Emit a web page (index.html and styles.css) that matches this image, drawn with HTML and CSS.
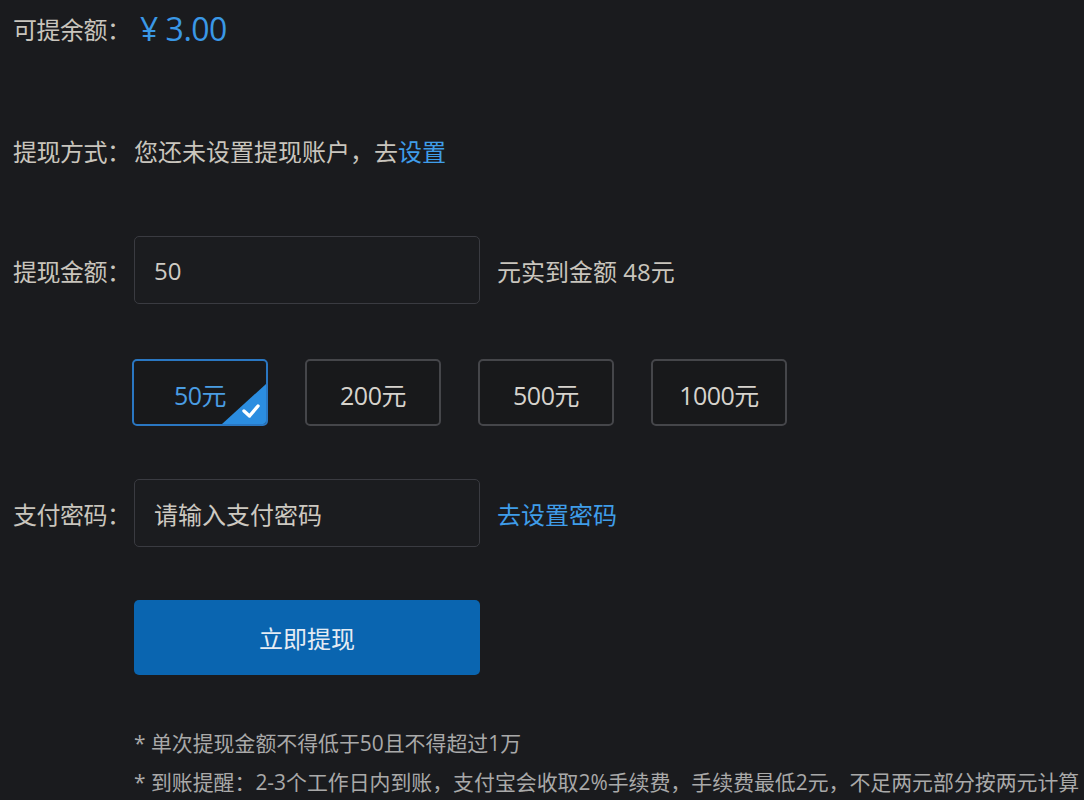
FILE: index.html
```html
<!DOCTYPE html>
<html lang="zh-CN">
<head>
<meta charset="utf-8">
<title>提现</title>
<link rel="stylesheet" href="styles.css">
</head>
<body>
<main class="page">
  <div class="row row-balance">
    <span class="label">可提余额：</span>
    <span class="balance">¥ 3.00</span>
  </div>
  <div class="row row-method">
    <span class="label">提现方式：</span>
    <span class="text">您还未设置提现账户，去<a class="link" href="#">设置</a></span>
  </div>
  <div class="row row-amount">
    <span class="label">提现金额：</span>
    <div class="field"><span class="value">50</span></div>
    <span class="aside">元实到金额 48元</span>
  </div>
  <div class="row row-options">
    <span class="label"></span>
    <div class="options">
      <div class="opt selected">50元
        <span class="corner">
          <svg viewBox="0 0 44 40" width="44" height="40"><polygon points="44,0 44,40 0,40" fill="#2b8de0"/><path d="M22 27 L27.5 32 L36 22" fill="none" stroke="#ffffff" stroke-width="3.4" stroke-linecap="round" stroke-linejoin="round"/></svg>
        </span>
      </div>
      <div class="opt">200元</div>
      <div class="opt">500元</div>
      <div class="opt">1000元</div>
    </div>
  </div>
  <div class="row row-pwd">
    <span class="label">支付密码：</span>
    <div class="field"><span class="placeholder">请输入支付密码</span></div>
    <a class="aside link" href="#">去设置密码</a>
  </div>
  <div class="row row-submit">
    <span class="label"></span>
    <button class="submit" type="button">立即提现</button>
  </div>
  <div class="notes">
    <p>* 单次提现金额不得低于50且不得超过1万</p>
    <p>* 到账提醒：2-3个工作日内到账，支付宝会收取2%手续费，手续费最低2元，不足两元部分按两元计算</p>
  </div>
</main>
</body>
</html>
```
FILE: styles.css
```css
html, body {
  margin: 0;
  padding: 0;
  background: #1a1b1e;
}
body {
  width: 1084px;
  height: 800px;
  overflow: hidden;
  font-family: "Open Sans", "Noto Sans CJK SC", sans-serif;
  color: #c9c5bd;
}
.page {
  padding-left: 13px;
  display: flex;
  flex-direction: column;
}
.row {
  display: flex;
  align-items: center;
  font-size: 24px;
}
.label {
  width: 121px;
  flex: none;
  white-space: nowrap;
  letter-spacing: -0.5px;
}
.row-balance { height: 56px; }
.balance {
  margin-left: 6px;
  color: #3a98e6;
  font-size: 32px;
  letter-spacing: -0.5px;
}
.row-method { height: 56px; margin-top: 66px; }
.link {
  color: #3f9de9;
  text-decoration: none;
}
.row-amount { height: 68px; margin-top: 58px; }
.field {
  width: 346px;
  height: 68px;
  box-sizing: border-box;
  border: 1px solid #3a3b41;
  border-radius: 5px;
  background: #1b1c1f;
  display: flex;
  align-items: center;
  padding-left: 19px;
}
.value { color: #cfcbc4; font-size: 24px; }
.placeholder { color: #cdc9c1; font-size: 24px; }
.aside {
  margin-left: 17px;
}
.row-options { height: 68px; margin-top: 54px; }
.options {
  display: flex;
  gap: 37px;
  margin-left: -2px;
}
.opt {
  position: relative;
  width: 136px;
  height: 67px;
  box-sizing: border-box;
  border: 2px solid #45464a;
  border-radius: 5px;
  background: #18191b;
  display: flex;
  align-items: center;
  justify-content: center;
  padding-top: 3px;
  font-size: 25px;
  color: #d6d3cd;
  letter-spacing: -0.5px;
  overflow: hidden;
}
.opt.selected {
  border-color: #2a77c2;
  color: #4a9de3;
}
.corner {
  position: absolute;
  right: 0;
  bottom: 0;
  width: 44px;
  height: 40px;
  display: block;
}
.corner svg { display: block; }
.row-pwd { height: 68px; margin-top: 53px; }
.row-submit { height: 75px; margin-top: 53px; }
.submit {
  width: 346px;
  height: 75px;
  border: none;
  border-radius: 5px;
  background: #0a65b0;
  color: #e4ecf4;
  font-family: inherit;
  font-size: 24px;
  cursor: pointer;
}
.notes {
  margin-top: 49px;
  padding-left: 121px;
  font-size: 20.9px;
  color: #a9a9a9;
}
.notes p {
  margin: 0;
  height: 39px;
  line-height: 39px;
  white-space: nowrap;
}
```
